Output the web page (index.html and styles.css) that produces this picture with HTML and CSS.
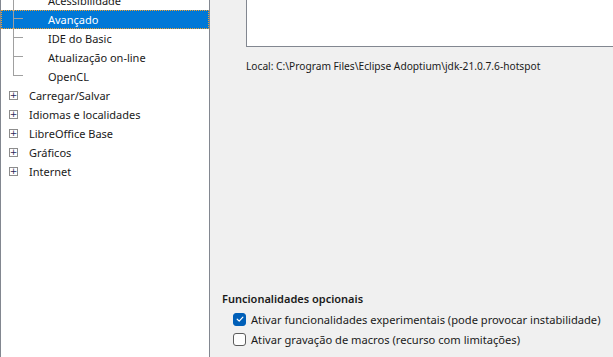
FILE: index.html
```html
<!DOCTYPE html>
<html lang="pt">
  <head>
    <meta charset="UTF-8" />
    <title>Opções - Avançado</title>
    <link rel="stylesheet" href="styles.css">
  </head>
  <body>
    <div class="dialog">
      <div class="tree">
        <ul class="tree-list">
          <li class="node child"><span class="guide"><span class="guide-top"></span><span class="guide-bottom"></span></span><span class="label">Acessibilidade</span></li>
          <li class="node child selected"><span class="guide"><span class="guide-top"></span><span class="guide-bottom"></span></span><span class="label">Avançado</span></li>
          <li class="node child"><span class="guide"><span class="guide-top"></span><span class="guide-bottom"></span></span><span class="label">IDE do Basic</span></li>
          <li class="node child"><span class="guide"><span class="guide-top"></span><span class="guide-bottom"></span></span><span class="label">Atualização on-line</span></li>
          <li class="node child last"><span class="guide"><span class="guide-top"></span><span class="guide-bottom"></span></span><span class="label">OpenCL</span></li>
          <li class="node parent"><span class="expander">+</span><span class="label">Carregar/Salvar</span></li>
          <li class="node parent"><span class="expander">+</span><span class="label">Idiomas e localidades</span></li>
          <li class="node parent"><span class="expander">+</span><span class="label">LibreOffice Base</span></li>
          <li class="node parent"><span class="expander">+</span><span class="label">Gráficos</span></li>
          <li class="node parent"><span class="expander">+</span><span class="label">Internet</span></li>
        </ul>
      </div>

      <div class="content">
        <div class="jre-list"></div>
        <p class="jre-location">Local: C:\Program Files\Eclipse Adoptium\jdk-21.0.7.6-hotspot</p>

        <div class="optional">
          <h3>Funcionalidades opcionais</h3>
          <label class="check">
            <span class="box checked">
              <svg width="10" height="10" viewBox="0 0 10 10"><path d="M2.2 5.2 L4.2 7.1 L7.9 3.1" fill="none" stroke="#fff" stroke-width="1.2" stroke-linecap="round" stroke-linejoin="round"/></svg>
            </span>
            Ativar funcionalidades experimentais (pode provocar instabilidade)
          </label>
          <label class="check">
            <span class="box"></span>
            Ativar gravação de macros (recurso com limitações)
          </label>
        </div>
      </div>
    </div>
  </body>
</html>
```

FILE: styles.css
```css
* {
  box-sizing: border-box;
  margin: 0;
  padding: 0;
}

body {
  font-family: "Noto Sans", "Segoe UI", sans-serif;
  font-size: 11px;
  color: #1a1a1a;
  background-color: #f0f0f0;
  overflow: hidden;
}

.dialog {
  display: flex;
  width: 613px;
  height: 357px;
}

/* Tree panel */
.tree {
  width: 210px;
  flex-shrink: 0;
  background-color: #fff;
  border-left: 1px solid #828790;
  border-right: 1px solid #828790;
  overflow: hidden;
}

.tree-list {
  list-style: none;
  margin-top: -9px;
}

.node {
  display: flex;
  align-items: center;
  height: 19px;
  white-space: nowrap;
}

.node .label {
  line-height: 19px;
}

.child {
  padding-left: 12px;
}

.child .label {
  margin-left: 25px;
}

.guide {
  display: flex;
  flex-direction: column;
  width: 10px;
  height: 19px;
}

.guide-top {
  height: 9px;
  border-left: 1px solid #a0a0a0;
  border-bottom: 1px solid #a0a0a0;
}

.guide-bottom {
  flex: 1;
  border-left: 1px solid #a0a0a0;
}

.last .guide-bottom {
  border-left: none;
}

.selected {
  background-color: #0078d7;
  color: #fff;
  outline: 1px dotted #f0a030;
  outline-offset: -1px;
}

.parent {
  padding-left: 8px;
}

.expander {
  display: flex;
  align-items: center;
  justify-content: center;
  width: 9px;
  height: 9px;
  border: 1px solid #8c8c8c;
  font-size: 9px;
  line-height: 1;
  color: #2a2a5a;
  font-family: "DejaVu Sans", sans-serif;
}

.parent .label {
  margin-left: 11px;
}

/* Right side */
.content {
  flex: 1;
  display: flex;
  flex-direction: column;
  padding-left: 36px;
}

.jre-list {
  height: 47px;
  background-color: #fff;
  border-left: 1px solid #828790;
  border-bottom: 1px solid #828790;
}

.jre-location {
  margin-top: 12px;
  font-size: 10.2px;
  color: #1a1a1a;
  white-space: nowrap;
}

.optional {
  margin-top: auto;
  margin-left: -24px;
  padding-bottom: 8px;
}

.optional h3 {
  font-size: 11px;
  font-weight: 600;
  margin-bottom: 3px;
}

.check {
  display: flex;
  align-items: center;
  gap: 5px;
  height: 20px;
  padding-left: 11px;
  font-size: 11.15px;
  white-space: nowrap;
}

.box {
  display: flex;
  align-items: center;
  justify-content: center;
  width: 13px;
  height: 13px;
  border: 1px solid #5c5c5c;
  border-radius: 3px;
  background-color: #fdfdfd;
}

.box.checked {
  background-color: #005fb8;
  border-color: #005fb8;
}
```
